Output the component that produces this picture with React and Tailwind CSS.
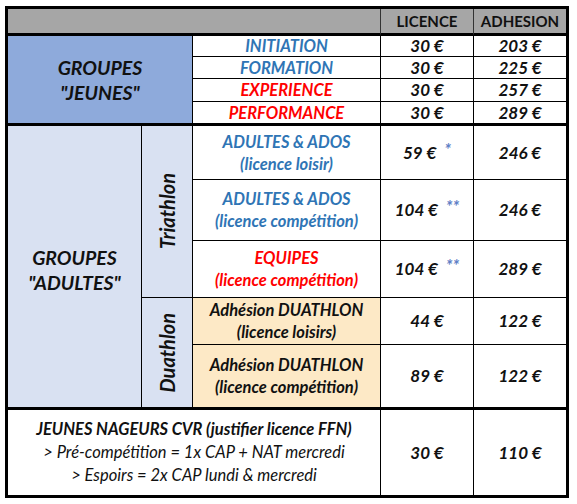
import React from "react";

const F = { fontFamily: "Lato, 'Liberation Sans', sans-serif" };

function Cell({ className = "", children }) {
  return (
    <div className={"flex flex-col items-center justify-center text-center border-black " + className}>
      {children}
    </div>
  );
}

function Price({ v, star }) {
  return (
    <span className="font-bold italic text-[17px] text-[#111] whitespace-nowrap">
      {v}
      {star && <span className="ml-[8px] relative -top-[3px] text-[#5f7fc6] font-bold text-[17px]">{star}</span>}
    </span>
  );
}

export default function App() {
  const t = "font-bold italic text-[16.5px] leading-[22px] whitespace-nowrap ";
  const blue = "text-[#2f75b5]";
  const red = "text-[#ff0000]";
  const blk = "text-[#111]";
  return (
    <div className="bg-white w-[577px] h-[504px] pt-[6px] pl-[5px]" style={F}>
      <div className="border-[3px] border-black w-[564px]">
        <div className="grid grid-cols-[134px_51px_188px_93px_92px] grid-rows-[27px_21px_22px_23px_24px_54px_61px_57px_47px_65px_85px]">
          {/* header */}
          <Cell className="col-span-3 bg-[#a6a6a6] border-b-[3px] border-r border-r-[#333]" />
          <Cell className="bg-[#a6a6a6] border-b-[3px] border-r border-r-[#333]">
            <span className="font-bold text-[15px] text-[#111] pt-[1px]">LICENCE</span>
          </Cell>
          <Cell className="bg-[#a6a6a6] border-b-[3px]">
            <span className="font-bold text-[15px] text-[#111] pt-[1px]">ADHESION</span>
          </Cell>

          {/* jeunes */}
          <Cell className="col-span-2 row-span-4 bg-[#8eaadb] border-r border-b-[3px]">
            <span className="font-bold italic text-[19.5px] leading-[25px] text-[#111]">GROUPES</span>
            <span className="font-bold italic text-[19.5px] leading-[25px] text-[#111]">"JEUNES"</span>
          </Cell>
          <Cell className="border-r border-b"><span className={t + blue}>INITIATION</span></Cell>
          <Cell className="border-r border-b"><Price v="30 €" /></Cell>
          <Cell className="border-b"><Price v="203 €" /></Cell>

          <Cell className="border-r border-b"><span className={t + blue}>FORMATION</span></Cell>
          <Cell className="border-r border-b"><Price v="30 €" /></Cell>
          <Cell className="border-b"><Price v="225 €" /></Cell>

          <Cell className="border-r border-b"><span className={t + red}>EXPERIENCE</span></Cell>
          <Cell className="border-r border-b"><Price v="30 €" /></Cell>
          <Cell className="border-b"><Price v="257 €" /></Cell>

          <Cell className="border-r border-b-[3px]"><span className={t + red}>PERFORMANCE</span></Cell>
          <Cell className="border-r border-b-[3px]"><Price v="30 €" /></Cell>
          <Cell className="border-b-[3px]"><Price v="289 €" /></Cell>

          {/* adultes */}
          <Cell className="row-span-5 bg-[#d9e1f2] border-r border-b-[3px]">
            <span className="font-bold italic text-[19.5px] leading-[25px] text-[#111] pt-[6px]">GROUPES</span>
            <span className="font-bold italic text-[19.5px] leading-[25px] text-[#111]">"ADULTES"</span>
          </Cell>
          <Cell className="row-span-3 bg-[#d9e1f2] border-r border-b">
            <span className="[writing-mode:vertical-rl] rotate-180 font-bold italic text-[20px] leading-none text-[#111]">Triathlon</span>
          </Cell>
          <Cell className="border-r border-b">
            <span className={t + blue}>ADULTES &amp; ADOS</span>
            <span className={t + blue}>(licence loisir)</span>
          </Cell>
          <Cell className="border-r border-b"><Price v="59 €" star="*" /></Cell>
          <Cell className="border-b"><Price v="246 €" /></Cell>

          <Cell className="border-r border-b">
            <span className={t + blue}>ADULTES &amp; ADOS</span>
            <span className={t + blue}>(licence compétition)</span>
          </Cell>
          <Cell className="border-r border-b"><Price v="104 €" star="**" /></Cell>
          <Cell className="border-b"><Price v="246 €" /></Cell>

          <Cell className="border-r border-b">
            <span className={t + red}>EQUIPES</span>
            <span className={t + red}>(licence compétition)</span>
          </Cell>
          <Cell className="border-r border-b"><Price v="104 €" star="**" /></Cell>
          <Cell className="border-b"><Price v="289 €" /></Cell>

          <Cell className="row-span-2 bg-[#d9e1f2] border-r border-b-[3px]">
            <span className="[writing-mode:vertical-rl] rotate-180 font-bold italic text-[20px] leading-none text-[#111]">Duathlon</span>
          </Cell>
          <Cell className="bg-[#fde9c6] border-r border-b">
            <span className={t + blk}>Adhésion DUATHLON</span>
            <span className={t + blk}>(licence loisirs)</span>
          </Cell>
          <Cell className="border-r border-b"><Price v="44 €" /></Cell>
          <Cell className="border-b"><Price v="122 €" /></Cell>

          <Cell className="bg-[#fde9c6] border-r border-b-[3px]">
            <span className={t + blk}>Adhésion DUATHLON</span>
            <span className={t + blk}>(licence compétition)</span>
          </Cell>
          <Cell className="border-r border-b-[3px]"><Price v="89 €" /></Cell>
          <Cell className="border-b-[3px]"><Price v="122 €" /></Cell>

          {/* bottom */}
          <Cell className="col-span-3 border-r">
            <span className="font-bold italic text-[16.5px] leading-[23px] text-[#111] whitespace-nowrap">JEUNES NAGEURS CVR (justifier licence FFN)</span>
            <span className="italic text-[16.5px] leading-[23px] text-[#111] whitespace-nowrap">&gt; Pré-compétition = 1x CAP + NAT mercredi</span>
            <span className="italic text-[16.5px] leading-[23px] text-[#111] whitespace-nowrap">&gt; Espoirs = 2x CAP lundi &amp; mercredi</span>
          </Cell>
          <Cell className="border-r"><Price v="30 €" /></Cell>
          <Cell><Price v="110 €" /></Cell>
        </div>
      </div>
    </div>
  );
}
